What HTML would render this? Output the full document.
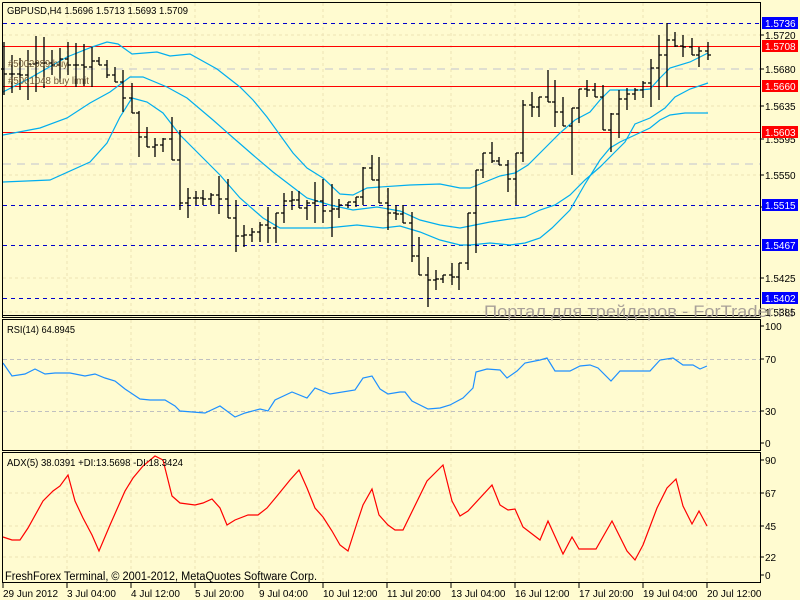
<!DOCTYPE html>
<html><head><meta charset="utf-8"><style>
html,body{margin:0;padding:0;background:#FFFBD0;width:800px;height:600px;overflow:hidden}
svg{display:block}
text{font-family:"Liberation Sans",sans-serif;font-size:10px;fill:#000}
</style></head><body>
<svg id="s" width="800" height="600" viewBox="0 0 800 600" xmlns="http://www.w3.org/2000/svg">
<rect width="800" height="600" fill="#FFFBD0"/>
<g stroke="#EDE3B5" stroke-dasharray="3,3" stroke-width="1">
<path d="M67 3V317M131 3V317M195 3V317M259 3V317M323 3V317M387 3V317M451 3V317M515 3V317M579 3V317M643 3V317M707 3V317"/>
<path d="M67 320V450M131 320V450M195 320V450M259 320V450M323 320V450M387 320V450M451 320V450M515 320V450M579 320V450M643 320V450M707 320V450"/>
<path d="M67 452V582M131 452V582M195 452V582M259 452V582M323 452V582M387 452V582M451 452V582M515 452V582M579 452V582M643 452V582M707 452V582"/>
<path d="M3 35H760M3 106H760M3 139H760M3 175H760M3 278H760M3 312H760M3 493H760M3 526H760M3 557H760"/>
</g>
<g stroke="#D6D6D0" stroke-dasharray="8,6" stroke-width="1.5"><path d="M3 69H760M3 164H760"/></g>
<g stroke="#0000CC" stroke-dasharray="4,4" stroke-width="1"><path d="M3 23.5H760M3 205.5H760M3 245.5H760M3 298.5H760"/></g>
<g stroke="#FF0000" stroke-width="1"><path d="M3 46.5H760M3 86.5H760M3 132.5H760"/></g>
<g fill="none" stroke="#00AEEF" stroke-width="1.2">
<polyline points="3,92 30,78 67,57 92,47 107,42 118,44 132,54 157,52 170,56 190,54 217,69 240,87 253,100 267,117 280,135 293,153 307,168 323,178 340,194 353,195 367,188 380,187 410,185 440,184 460,188 470,188 485,182 500,176 515,173 528,165 545,148 560,133 575,120 590,112 600,100 610,90 625,90 640,90 650,89 660,78 670,68 690,62 708,53"/>
<polyline points="3,135 40,128 67,118 90,103 110,92 130,77 143,77 167,87 187,98 213,120 230,135 253,155 273,172 290,185 307,198 330,205 353,210 377,207 400,211 420,220 440,225 460,228 470,226 490,222 510,219 525,217 540,210 555,205 570,195 585,180 600,167 615,152 625,142 635,124 650,118 665,108 675,97 690,89 708,83"/>
<polyline points="3,182 50,180 90,162 107,143 120,117 132,98 147,102 163,113 180,135 200,155 220,175 240,198 263,218 280,228 327,228 357,225 383,228 400,226 420,232 440,240 460,245 470,245 490,243 510,245 525,243 540,238 552,228 570,210 585,184 600,160 610,148 620,142 635,135 650,128 660,120 670,115 685,113 708,113"/>
</g>
<g id="bars" stroke="#000" stroke-width="1.3" fill="none"></g>
<g stroke="#C0C0C0" stroke-dasharray="4,3"><path d="M3 359.5H760M3 411.5H760"/></g>
<polyline fill="none" stroke="#1E90FF" stroke-width="1.2" points="3,363 12,376 25,374 35,369 45,374 55,373 70,373 85,376 95,374 105,378 115,381 125,389 140,399 150,400 165,400 175,406 180,411 205,413 220,406 235,417 245,413 260,409 268,411 275,400 292,392 307,398 315,388 330,394 355,390 363,378 372,376 380,389 388,394 400,392 405,392 412,401 428,409 440,408 450,405 463,398 473,388 476,372 487,369 500,370 507,378 517,371 525,363 540,360 547,358 555,371 570,371 580,366 590,365 598,368 611,381 620,371 650,371 660,360 673,358 683,365 693,365 700,369 707,366"/>
<polyline fill="none" stroke="#FF0000" stroke-width="1.2" points="3,537 12,540 20,540 28,528 43,501 53,491 60,486 68,475 75,501 83,518 92,535 99,551 110,525 125,491 133,478 143,466 155,456 163,460 172,496 180,503 195,505 203,503 212,499 220,508 227,525 235,520 248,515 258,515 267,508 277,496 290,480 299,470 307,488 315,508 323,517 332,531 340,545 348,551 357,523 363,505 372,489 379,515 388,525 395,530 403,530 427,481 443,465 452,501 460,516 468,511 492,485 500,505 508,510 515,509 523,527 540,540 548,521 563,554 572,537 579,549 596,549 612,521 627,551 635,560 643,545 657,508 667,488 676,479 683,506 692,524 699,511 707,526"/>
<g stroke="#000" fill="none" stroke-width="1">
<path d="M2.5 2.5H760.5V317.5M2.5 2.5V317.5H760.5"/>
<path d="M2.5 315.5H760.5"/>
<path d="M2.5 319.5H760.5V450.5H2.5Z"/>
<path d="M2.5 452.5H760.5V582.5H2.5Z"/>
<path d="M3 583V588M67 583V588M131 583V588M195 583V588M259 583V588M323 583V588M387 583V588M451 583V588M515 583V588M579 583V588M643 583V588M707 583V588"/>
<path d="M760 35H764M760 69H764M760 106H764M760 139H764M760 175H764M760 207H764M760 278H764M760 312H764M760 326H764M760 359H764M760 411H764M760 443H764M760 460H764M760 493H764M760 526H764M760 557H764M760 575H764"/>
</g>
<text x="7" y="14" textLength="181" lengthAdjust="spacingAndGlyphs">GBPUSD,H4  1.5696 1.5713 1.5693 1.5709</text>
<text x="8" y="67" style="fill:#705838" textLength="60" lengthAdjust="spacingAndGlyphs">#5002089 buy</text>
<text x="8" y="84" style="fill:#705838" textLength="81" lengthAdjust="spacingAndGlyphs">#5001048 buy limit</text>
<text x="484" y="317" style="font-size:17px;fill:#A8A098" textLength="310" lengthAdjust="spacingAndGlyphs">Портал для трейдеров - ForTrader.ru</text>
<g>
<text x="765" y="39">1.5720</text><text x="765" y="73">1.5680</text><text x="765" y="110">1.5635</text><text x="765" y="143">1.5595</text><text x="765" y="179">1.5550</text><text x="765" y="211">1.5510</text><text x="765" y="282">1.5425</text><text x="765" y="316">1.5385</text>
</g>
<rect x="762" y="17" width="36" height="12" fill="#0000FF"/><text x="765" y="27" style="fill:#fff">1.5736</text>
<rect x="762" y="40" width="36" height="12" fill="#FF0000"/><text x="765" y="50" style="fill:#fff">1.5708</text>
<rect x="762" y="80" width="36" height="12" fill="#FF0000"/><text x="765" y="90" style="fill:#fff">1.5660</text>
<rect x="762" y="126" width="36" height="12" fill="#FF0000"/><text x="765" y="136" style="fill:#fff">1.5603</text>
<rect x="762" y="199" width="36" height="12" fill="#0000FF"/><text x="765" y="209" style="fill:#fff">1.5515</text>
<rect x="762" y="239" width="36" height="12" fill="#0000FF"/><text x="765" y="249" style="fill:#fff">1.5467</text>
<rect x="762" y="292" width="36" height="12" fill="#0000FF"/><text x="765" y="302" style="fill:#fff">1.5402</text>
<text x="7" y="333" textLength="68" lengthAdjust="spacingAndGlyphs">RSI(14) 64.8945</text>
<text x="765" y="330">100</text><text x="765" y="363">70</text><text x="765" y="415">30</text><text x="765" y="447">0</text>
<text x="7" y="466" textLength="176" lengthAdjust="spacingAndGlyphs">ADX(5) 38.0391 +DI:13.5698 -DI:18.3424</text>
<text x="765" y="464">90</text><text x="765" y="497">67</text><text x="765" y="530">45</text><text x="765" y="561">22</text><text x="765" y="579">0</text>
<text x="5" y="580" style="font-size:11.5px" textLength="312" lengthAdjust="spacingAndGlyphs">FreshForex Terminal, © 2001-2012, MetaQuotes Software Corp.</text>
<g><text x="3" y="597">29 Jun 2012</text><text x="67" y="597">3 Jul 04:00</text><text x="131" y="597">4 Jul 12:00</text><text x="195" y="597">5 Jul 20:00</text><text x="259" y="597">9 Jul 04:00</text><text x="323" y="597">10 Jul 12:00</text><text x="387" y="597">11 Jul 20:00</text><text x="451" y="597">13 Jul 04:00</text><text x="515" y="597">16 Jul 12:00</text><text x="579" y="597">17 Jul 20:00</text><text x="643" y="597">19 Jul 04:00</text><text x="707" y="597">20 Jul 12:00</text></g>
</svg>
<script>
var b=[[4,42,95],[12,55,93],[20,58,90],[28,50,100],[36,36,92],[44,37,88],[52,50,75],[60,48,82],[68,42,75],[76,43,87],[84,44,86],[92,47,87],[99,57,65],[107,60,78],[115,67,82],[123,70,112],[132,83,113],[139,111,157],[147,127,147],[155,138,157],[163,138,152],[172,117,160],[180,130,210],[188,188,218],[196,191,205],[203,190,205],[211,193,205],[219,176,214],[228,179,218],[236,200,252],[244,225,247],[252,228,242],[260,222,242],[268,207,243],[276,213,243],[284,193,223],[292,191,210],[299,191,208],[307,200,220],[315,182,223],[323,179,223],[332,184,237],[339,199,218],[348,202,208],[356,197,207],[363,167,205],[372,155,180],[379,157,203],[388,188,230],[396,205,220],[403,205,223],[412,212,262],[419,237,275],[428,257,307],[436,270,290],[443,275,283],[452,263,285],[459,263,290],[468,213,270],[476,170,253],[483,153,178],[492,142,163],[499,157,165],[508,160,192],[516,153,205],[523,100,162],[532,92,117],[539,97,117],[548,70,102],[555,80,127],[563,97,126],[572,108,175],[579,89,123],[587,80,97],[595,83,97],[603,85,130],[611,113,152],[619,90,138],[627,88,110],[635,88,100],[643,81,98],[651,59,107],[659,35,100],[667,23,87],[675,32,47],[683,35,57],[692,38,55],[699,47,67],[708,42,60]];
var d="",prev=null;
for(var i=0;i<b.length;i++){var x=b[i][0],h=b[i][1],l=b[i][2],n=b[i+1];
var o=prev==null?(h+l)/2:Math.min(l,Math.max(h,prev));
var c=n?Math.min(l,Math.max(h,(n[1]+n[2])/2)):55;
d+="M"+x+" "+h+"V"+l+"M"+(x-3)+" "+o.toFixed(0)+"H"+x+"M"+x+" "+c.toFixed(0)+"H"+(x+3);prev=c;}
var p=document.createElementNS("http://www.w3.org/2000/svg","path");p.setAttribute("d",d);document.getElementById("bars").appendChild(p);
</script>
</body></html>
